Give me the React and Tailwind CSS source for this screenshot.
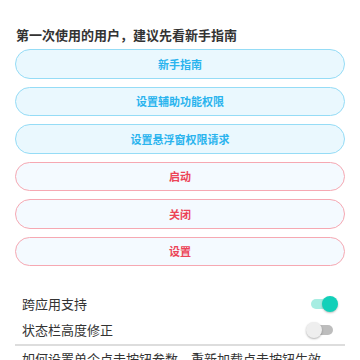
export default function App() {
  const font = { fontFamily: '"Noto Sans CJK SC", "Noto Sans", sans-serif' };
  const blue = ["新手指南", "设置辅助功能权限", "设置悬浮窗权限请求"];
  const red = ["启动", "关闭", "设置"];
  return (
    <div className="w-[360px] h-[360px] overflow-hidden bg-white flex flex-col" style={font}>
      <div className="h-[3px] overflow-hidden px-[15px]">
        <div className="-mt-[16px] text-[13px] leading-[18px] text-[#b0b0b0] whitespace-nowrap">
          如何设置单个点击按钮参数，重新加载点击按钮生效，点击按钮生效
        </div>
      </div>
      <div className="px-[15px] pt-[26px]">
        <div className="text-[13px] leading-[18px] font-bold text-[#333333] pl-[1px]">
          第一次使用的用户，建议先看新手指南
        </div>
        <div className="mt-[5px] flex flex-col gap-[8px]">
          {blue.map((t) => (
            <div
              key={t}
              className="h-[29.5px] rounded-full border border-[#95dcf6] bg-[#eaf8fe] flex items-center justify-center text-[11px] font-bold text-[#2ab4ee]"
            >
              {t}
            </div>
          ))}
          {red.map((t) => (
            <div
              key={t}
              className="h-[29.5px] rounded-full border border-[#f6a8b2] bg-[#f4faff] flex items-center justify-center text-[11px] font-bold text-[#ec4457]"
            >
              {t}
            </div>
          ))}
        </div>
        <div className="mt-[25px] flex flex-col">
          <div className="h-[26px] flex items-center justify-between pl-[7px] pr-[10px]">
            <span className="text-[13px] text-[#333333]">跨应用支持</span>
            <div className="relative w-[24px] h-[10px] rounded-full bg-[#a6ede2]">
              <div className="absolute right-[-3px] top-[-3px] w-[16px] h-[16px] rounded-full bg-[#12d0b9] shadow-[0_1px_2px_rgba(0,0,0,0.25)]" />
            </div>
          </div>
          <div className="h-[26px] flex items-center justify-between pl-[7px] pr-[12px]">
            <span className="text-[13px] text-[#333333]">状态栏高度修正</span>
            <div className="relative w-[22px] h-[10px] rounded-full bg-[#bdbdbd]">
              <div className="absolute left-[-5px] top-[-3px] w-[16px] h-[16px] rounded-full bg-[#eeeeee] shadow-[0_1px_2px_rgba(0,0,0,0.3)]" />
            </div>
          </div>
        </div>
        <div className="mt-[1px] h-[1.5px] bg-[#dddddd]" />
        <div className="pl-[7px] mt-[4px] text-[13px] leading-[18px] text-[#333333] whitespace-nowrap">
          如何设置单个点击按钮参数，重新加载点击按钮生效
        </div>
      </div>
    </div>
  );
}
